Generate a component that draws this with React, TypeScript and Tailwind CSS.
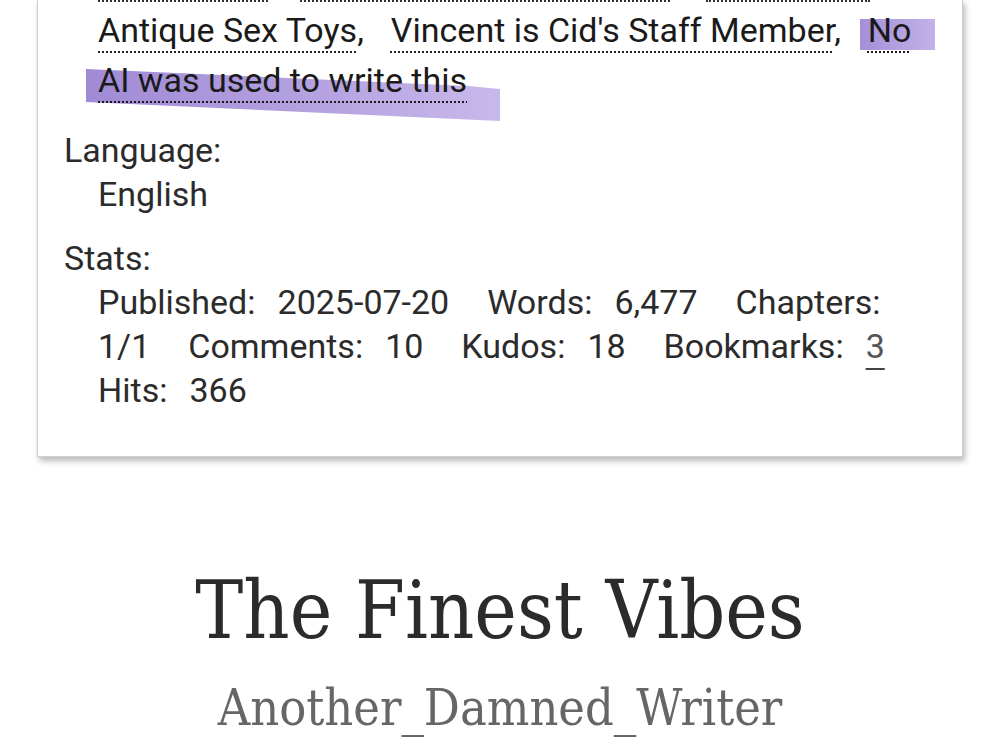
const sans = { fontFamily: 'Roboto, "Noto Sans", sans-serif' }

function Tag({ children }: { children: React.ReactNode }) {
  return (
    <>
      <span className="underline decoration-dotted decoration-[2px] underline-offset-[9px] decoration-[#222]">
        {children}
      </span>
      <span className="mr-[27px]">,</span>
    </>
  )
}

function Stat({ label, value, link }: { label: string; value: string; link?: boolean }) {
  return (
    <>
      <span className="mr-[22px]">{label}</span>
      <span className="mr-[38px]">
        {link ? (
          <span className="underline decoration-[2px] underline-offset-[10px] decoration-[#444] text-[#555]">{value}</span>
        ) : (
          value
        )}
      </span>
    </>
  )
}

export default function App() {
  return (
    <div className="min-h-[750px] w-[1000px] overflow-hidden bg-white text-[#2b2b2b]">
      <div
        className="-mt-[1px] ml-[37px] w-[926px] border border-[#cfcfcf] bg-white pb-[44px] pl-[26px] shadow-[2px_4px_6px_rgba(0,0,0,0.28)]"
        style={sans}
      >
        <div className="flex h-[5px] pl-[34px]">
          <span className="w-[170px] border-t-2 border-dotted border-[#333]" />
          <span className="ml-[32px] w-[370px] border-t-2 border-dotted border-[#333]" />
          <span className="ml-[36px] w-[164px] border-t-2 border-dotted border-[#333]" />
        </div>
        <div className="pl-[34px] text-[34px] leading-[50px] text-[#1a1a1a]">
          <Tag>Antique Sex Toys</Tag>
          <Tag>Vincent is Cid's Staff Member</Tag>
          <span className="relative inline-block">
            <span className="absolute -left-[8px] top-[14px] h-[31px] w-[75px] bg-gradient-to-r from-[#a58fd8] to-[#c2b2e8]" />
            <span className="relative underline decoration-dotted decoration-[2px] underline-offset-[9px]">No</span>
          </span>
          <br />
          <span className="relative inline-block">
            <svg className="absolute -left-[12px] top-[14px]" width="416" height="56" viewBox="0 0 416 56">
              <defs>
                <linearGradient id="hl" x1="0" x2="1" y1="0" y2="0">
                  <stop offset="0" stopColor="#a08ad6" />
                  <stop offset="0.6" stopColor="#b6a4e1" />
                  <stop offset="1" stopColor="#c8b9eb" />
                </linearGradient>
              </defs>
              <path d="M0 0 L382 17 L414 20 L414 52 L0 33 Z" fill="url(#hl)" />
            </svg>
            <span className="relative underline decoration-dotted decoration-[2px] underline-offset-[9px]">
              AI was used to write this
            </span>
          </span>
        </div>

        <div className="mt-[23px] text-[34px] leading-[44px]">
          <div>Language:</div>
          <div className="pl-[34px]">English</div>
          <div className="mt-[20px]">Stats:</div>
          <div className="flex flex-wrap pl-[34px]">
            <Stat label="Published:" value="2025-07-20" />
            <Stat label="Words:" value="6,477" />
            <Stat label="Chapters:" value="1/1" />
            <Stat label="Comments:" value="10" />
            <Stat label="Kudos:" value="18" />
            <Stat label="Bookmarks:" value="3" link />
            <Stat label="Hits:" value="366" />
          </div>
        </div>
      </div>

      <div className="mt-[109px] text-center" style={{ fontFamily: '"DejaVu Serif Condensed", "DejaVu Serif", serif' }}>
        <h1 className="text-[80px] leading-[90px] text-[#2b2b2b]">The Finest Vibes</h1>
        <div className="mt-[24px] text-[50px] leading-[56px] text-[#666]">Another_Damned_Writer</div>
      </div>
    </div>
  )
}
